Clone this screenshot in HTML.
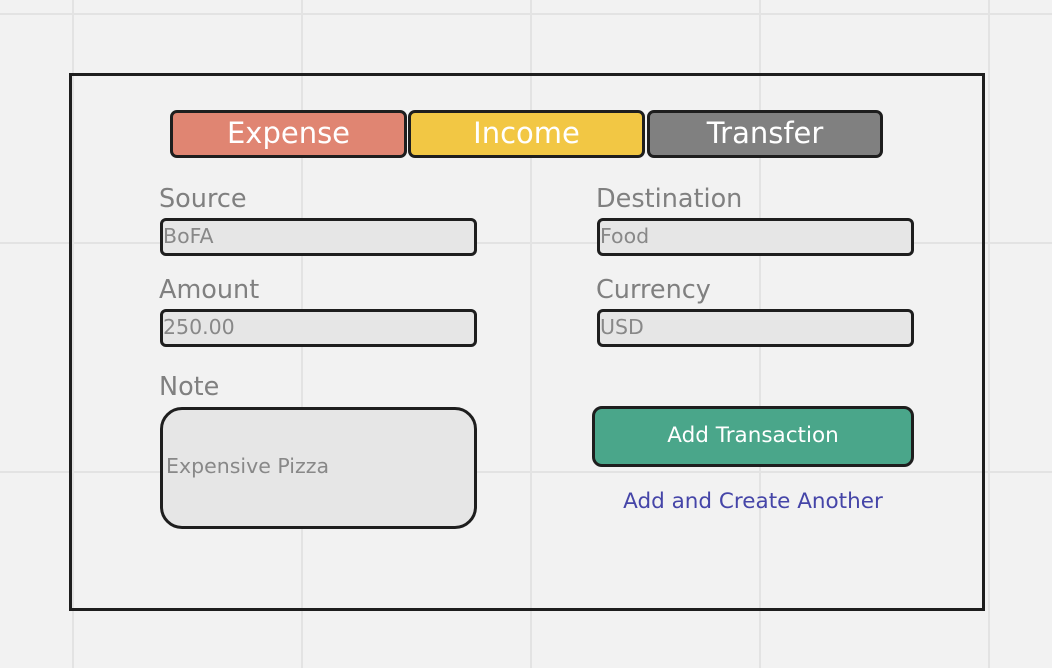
<!DOCTYPE html>
<html><head><meta charset="utf-8"><style>
*{margin:0;padding:0;box-sizing:border-box}
body{width:1052px;height:668px;overflow:hidden;background:#f2f2f2;position:relative;font-family:"DejaVu Sans","Liberation Sans",sans-serif;
background-image:linear-gradient(90deg,transparent 72px,#e3e3e3 72px,#e3e3e3 74px,transparent 74px),linear-gradient(180deg,transparent 13px,#e3e3e3 13px,#e3e3e3 15px,transparent 15px);
background-size:229px 229px;}
.a{position:absolute}
.frame{left:69px;top:73px;width:916px;height:538px;border:3px solid #1e1e1e}
.tab{top:110px;height:48px;border:3px solid #1e1e1e;border-radius:7px;color:#fff;font-size:29px;text-align:center;line-height:40px}
.lbl{font-size:25.5px;color:#808080;line-height:30px}
.in{height:38px;border:3px solid #1e1e1e;border-radius:6px;background:#e6e6e6;color:#888;font-size:20.5px;line-height:31px;padding-left:0px;width:317px}
</style></head><body>
<div class="a frame"></div>
<div class="a tab" style="left:170px;width:237px;background:#e08572">Expense</div>
<div class="a tab" style="left:408px;width:237px;background:#f2c744">Income</div>
<div class="a tab" style="left:647px;width:236px;background:#808080">Transfer</div>

<div class="a lbl" style="left:159px;top:184px">Source</div>
<div class="a in" style="left:160px;top:218px">BoFA</div>
<div class="a lbl" style="left:159px;top:275px">Amount</div>
<div class="a in" style="left:160px;top:309px">250.00</div>
<div class="a lbl" style="left:159px;top:372px">Note</div>
<div class="a in" style="left:160px;top:407px;height:122px;border-radius:22px;line-height:112px;padding-left:3px">Expensive Pizza</div>

<div class="a lbl" style="left:596px;top:184px">Destination</div>
<div class="a in" style="left:597px;top:218px">Food</div>
<div class="a lbl" style="left:596px;top:275px">Currency</div>
<div class="a in" style="left:597px;top:309px">USD</div>

<div class="a" style="left:592px;top:406px;width:322px;height:61px;border:3px solid #1e1e1e;border-radius:10px;background:#4aa68a;color:#fff;font-size:21.5px;text-align:center;line-height:54px">Add Transaction</div>
<div class="a" style="left:592px;top:487px;width:322px;text-align:center;color:#4545a8;font-size:21.5px;line-height:30px">Add and Create Another</div>
</body></html>
